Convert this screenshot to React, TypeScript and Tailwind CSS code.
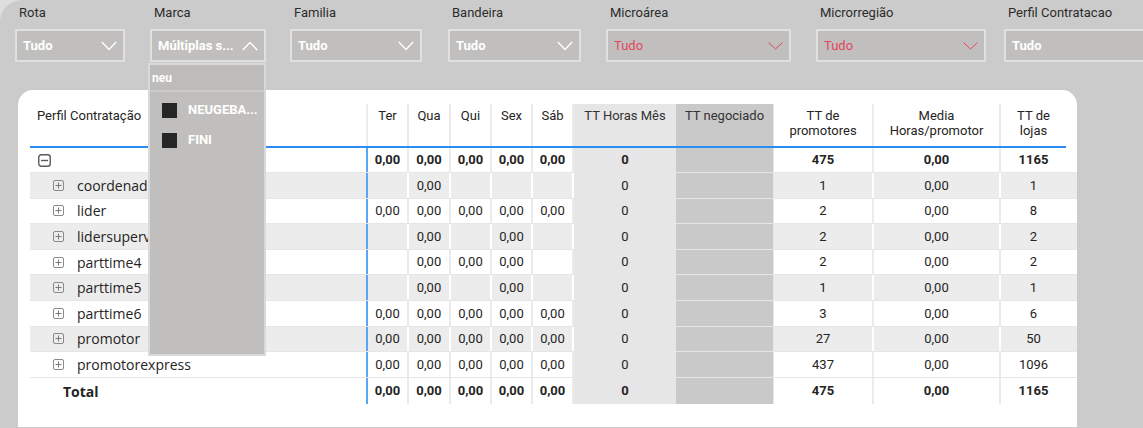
import React from 'react';

type Filter = {
  label: string;
  value: string;
  box: string;
  red?: boolean;
  open?: boolean;
};

const filters: Filter[] = [
  { label: 'Rota', value: 'Tudo', box: 'ml-[15px] w-[110px]' },
  { label: 'Marca', value: 'Múltiplas s...', box: 'ml-[25px] w-[116px]', open: true },
  { label: 'Familia', value: 'Tudo', box: 'ml-[24px] w-[132px]' },
  { label: 'Bandeira', value: 'Tudo', box: 'ml-[26px] w-[133px]' },
  { label: 'Microárea', value: 'Tudo', box: 'ml-[25px] w-[185px]', red: true },
  { label: 'Microrregião', value: 'Tudo', box: 'ml-[25px] w-[170px]', red: true },
  { label: 'Perfil Contratacao', value: 'Tudo', box: 'ml-[18px] w-[150px]' },
];

type Row = {
  label: string;
  days: string[];
  prom: string;
  lojas: string;
};

const all = ['0,00', '0,00', '0,00', '0,00', '0,00'];

const rows: Row[] = [
  { label: 'coordenador', days: ['', '0,00', '', '', ''], prom: '1', lojas: '1' },
  { label: 'lider', days: all, prom: '2', lojas: '8' },
  { label: 'lidersupervisor', days: ['', '0,00', '', '0,00', ''], prom: '2', lojas: '2' },
  { label: 'parttime4', days: ['', '0,00', '0,00', '0,00', ''], prom: '2', lojas: '2' },
  { label: 'parttime5', days: ['', '0,00', '', '0,00', ''], prom: '1', lojas: '1' },
  { label: 'parttime6', days: all, prom: '3', lojas: '6' },
  { label: 'promotor', days: all, prom: '27', lojas: '50' },
  { label: 'promotorexpress', days: all, prom: '437', lojas: '1096' },
];

const dayW = ['w-[41px]', 'w-[42px]', 'w-[41px]', 'w-[41px]', 'w-[41px]'];

function Chevron({ up, red }: { up?: boolean; red?: boolean }) {
  if (red) {
    return (
      <svg width="15" height="8" viewBox="0 0 15 8" className="shrink-0">
        <polyline points="0.5,0.5 7.5,7 14.5,0.5" fill="none" stroke="#e0485c" strokeWidth="1" />
      </svg>
    );
  }
  return (
    <svg width="16" height="10" viewBox="0 0 16 10" className="shrink-0">
      <polyline
        points={up ? '0.8,9 8,1.5 15.2,9' : '0.8,1 8,8.5 15.2,1'}
        fill="none"
        stroke="#ffffff"
        strokeWidth="1.4"
      />
    </svg>
  );
}

function ExpandIcon({ minus }: { minus?: boolean }) {
  if (minus) {
    return (
      <svg width="13" height="13" viewBox="0 0 13 13" className="shrink-0">
        <rect x="0.75" y="0.75" width="11.5" height="11.5" rx="2.5" fill="none" stroke="#5a5a5a" strokeWidth="1.4" />
        <line x1="3" y1="6.5" x2="10" y2="6.5" stroke="#5a5a5a" strokeWidth="1.4" />
      </svg>
    );
  }
  return (
    <svg width="11" height="11" viewBox="0 0 11 11" className="shrink-0">
      <rect x="0.5" y="0.5" width="10" height="10" rx="1.5" fill="none" stroke="#8a8a8a" strokeWidth="1" />
      <line x1="2.5" y1="5.5" x2="8.5" y2="5.5" stroke="#7a7a7a" strokeWidth="1" />
      <line x1="5.5" y1="2.5" x2="5.5" y2="8.5" stroke="#7a7a7a" strokeWidth="1" />
    </svg>
  );
}

function DataCells({
  days,
  tt,
  prom,
  media,
  lojas,
  bold,
  gray,
}: {
  days: string[];
  tt: string;
  prom: string;
  media: string;
  lojas: string;
  bold?: boolean;
  gray?: boolean;
}) {
  const sep = gray ? 'border-r-2 border-white' : 'border-r-2 border-[#ebebeb]';
  const weight = bold ? 'font-bold' : '';
  return (
    <>
      {days.map((d, i) => (
        <div key={i} className={`${dayW[i]} h-full flex items-center justify-center ${sep} ${weight}`}>
          {d}
        </div>
      ))}
      <div className={`w-[102px] h-full flex items-center justify-center bg-[#e6e6e6] ${weight}`}>{tt}</div>
      <div className="w-[98px] h-full bg-[#c9c9c9] border-r border-[#e6e6e6]" />
      <div className={`w-[100px] h-full flex items-center justify-center ${sep} ${weight}`}>{prom}</div>
      <div className={`w-[127px] h-full flex items-center justify-center ${sep} ${weight}`}>{media}</div>
      <div className={`w-[65px] h-full flex items-center justify-center ${weight}`}>{lojas}</div>
    </>
  );
}

export default function App() {
  return (
    <div className="relative w-[1143px] h-[428px] overflow-hidden bg-[#dedede] font-['Roboto',sans-serif] text-[#252423]">
      <div className="h-full bg-[#cbcbcb] rounded-tl-[22px] flex flex-col">
        {/* filter bar */}
        <div className="h-[90px] shrink-0 flex pt-[4px]">
          {filters.map((f) => (
            <div key={f.label} className={`${f.box} shrink-0 flex flex-col`}>
              <div className="pl-[4px] h-[17px] text-[13px] leading-[17px] text-[#2b2b2b] whitespace-nowrap">{f.label}</div>
              <div
                className={`mt-[8px] h-[33px] border-2 border-[#e0e0e0] bg-[#c1bfbd] flex items-center justify-between pl-[6px] pr-[6px] text-[13px] ${
                  f.red ? 'text-[#e0485c]' : 'text-white font-bold'
                }`}
              >
                <span className="whitespace-nowrap">{f.value}</span>
                {f.label === 'Perfil Contratacao' ? null : <Chevron up={f.open} red={f.red} />}
              </div>
            </div>
          ))}
        </div>

        {/* table card */}
        <div className="ml-[18px] w-[1059px] h-[337px] bg-white rounded-t-[15px] pl-[12px] pt-[14px] text-[13px]">
          {/* header */}
          <div className="flex h-[42px] leading-[15px] text-[13px] text-[#252423]">
            <div className="w-[338px] pl-[7px] pt-[4px] border-r-2 border-[#ebebeb]">Perfil Contratação</div>
            {['Ter', 'Qua', 'Qui', 'Sex', 'Sáb'].map((d, i) => (
              <div key={d} className={`${dayW[i]} text-center pt-[4px] border-r-2 border-[#ebebeb]`}>
                {d}
              </div>
            ))}
            <div className="w-[102px] text-center pt-[4px] bg-[#e6e6e6] text-[#333]">TT Horas Mês</div>
            <div className="w-[98px] text-center pt-[4px] bg-[#c9c9c9] text-[#333] border-r border-[#e6e6e6]">TT negociado</div>
            <div className="w-[100px] text-center pt-[4px] border-r-2 border-[#ebebeb]">
              TT de
              <br />
              promotores
            </div>
            <div className="w-[127px] text-center pt-[4px] border-r-2 border-[#ebebeb]">
              Media
              <br />
              Horas/promotor
            </div>
            <div className="w-[65px] text-center pt-[4px]">
              TT de
              <br />
              lojas
            </div>
          </div>
          <div className="w-[1036px] h-[2px] bg-[#2a8df5]" />

          {/* top (grand) row */}
          <div className="flex h-[25px] border-b border-[#e6e6e6]">
            <div className="w-[336px] h-full flex items-center pl-[8px]">
              <ExpandIcon minus />
            </div>
            <div className="w-[2px] h-full bg-[#5aa5f5]" />
            <DataCells days={all} tt="0" prom="475" media="0,00" lojas="1165" bold />
          </div>

          {rows.map((r, i) => {
            const gray = i % 2 === 0;
            return (
              <div
                key={r.label}
                className={`flex h-[25.6px] border-b border-[#e6e6e6] ${gray ? 'bg-[#ececec]' : 'bg-white'}`}
              >
                <div className="w-[336px] h-full flex items-center pl-[23px] font-['Open_Sans',sans-serif] text-[14px] text-[#252423] whitespace-nowrap overflow-hidden">
                  <ExpandIcon />
                  <span className="ml-[13px]">{r.label}</span>
                </div>
                <div className="w-[2px] h-full bg-[#5aa5f5]" />
                <DataCells days={r.days} tt="0" prom={r.prom} media="0,00" lojas={r.lojas} gray={gray} />
              </div>
            );
          })}

          {/* total row */}
          <div className="flex h-[26px]">
            <div className="w-[336px] h-full flex items-center pl-[33px] pt-[2px] font-['Open_Sans',sans-serif] font-bold text-[14px] text-[#252423]">
              Total
            </div>
            <div className="w-[2px] h-full bg-[#5aa5f5]" />
            <DataCells days={all} tt="0" prom="475" media="0,00" lojas="1165" bold />
          </div>
        </div>
      </div>

      {/* Marca dropdown popup */}
      <div className="absolute left-[148px] top-[63px] w-[118px] h-[293px] border-2 border-[#d9d9d9] bg-[#c1bfbd] font-['Roboto',sans-serif]">
        <div className="h-[27px] flex items-center pl-[2px] bg-[#bebcba] border-b-2 border-[#cdcbc9] text-[12px] font-bold text-white">
          neu
        </div>
        <div className="flex items-center h-[30px] pl-[12px] mt-[3px]">
          <div className="w-[15px] h-[15px] bg-[#262626]" />
          <span className="ml-[11px] text-[13px] font-bold text-white whitespace-nowrap">NEUGEBA...</span>
        </div>
        <div className="flex items-center h-[30px] pl-[12px]">
          <div className="w-[15px] h-[15px] bg-[#262626]" />
          <span className="ml-[11px] text-[13px] font-bold text-white">FINI</span>
        </div>
      </div>
    </div>
  );
}
